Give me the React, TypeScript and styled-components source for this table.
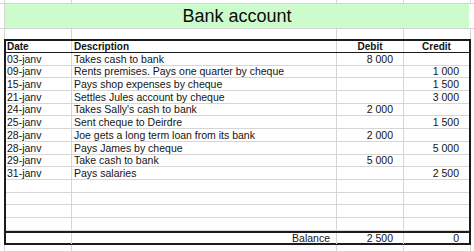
import React from 'react';
import styled, { createGlobalStyle } from 'styled-components';

const GRID = '#d6d6d6';
const INK = '#1b1b1b';

const GlobalStyle = createGlobalStyle`
  html, body {
    margin: 0;
    background: #ffffff;
  }
  body {
    font-family: "Liberation Sans", Arial, sans-serif;
    font-size: 10.5px;
    color: #141414;
  }
`;

const Sheet = styled.div`
  width: 474px;
  height: 251px;
  overflow: hidden;
  display: flex;
  flex-direction: column;
`;

// plain spreadsheet row outside the table (grid lines only)
const SheetRow = styled.div<{ $h: number; $line?: boolean }>`
  display: grid;
  grid-template-columns: 5px 67px 265px 67px 67px 1fr;
  height: ${({ $h }) => $h}px;
  flex: none;
  box-sizing: border-box;
  border-bottom: ${({ $line }) => ($line ? `1px solid ${GRID}` : 'none')};
`;

const SheetCell = styled.div`
  border-right: 1px solid ${GRID};
`;

const Banner = styled.div`
  grid-column: 2 / 6;
  background: #ccfccc;
  margin-right: 2px;
  display: flex;
  align-items: center;
  justify-content: center;
  font-size: 18px;
  color: #0c0c0c;
  padding-top: 1px;
`;

const Table = styled.div`
  flex: none;
  margin-left: 4px;
  width: 467px;
  box-sizing: border-box;
  border: 2px solid ${INK};
  background: #ffffff;
`;

const Row = styled.div<{ $h: number; $kind?: 'head' | 'body' | 'total' }>`
  display: grid;
  grid-template-columns: 66px 265px 67px 65px;
  height: ${({ $h }) => $h}px;
  box-sizing: border-box;
  border-bottom: ${({ $kind }) =>
    $kind === 'head' ? `1px solid ${INK}` : $kind === 'total' ? 'none' : `1px solid ${GRID}`};
  border-top: ${({ $kind }) => ($kind === 'total' ? `2px solid ${INK}` : 'none')};
  font-weight: ${({ $kind }) => ($kind === 'head' ? 'bold' : 'normal')};
  font-size: ${({ $kind }) => ($kind === 'head' ? '10px' : '10.5px')};
`;

const Cell = styled.div<{ $align?: 'left' | 'right' | 'center'; $pl?: number; $pr?: number }>`
  display: flex;
  align-items: flex-end;
  justify-content: ${({ $align }) =>
    $align === 'right' ? 'flex-end' : $align === 'center' ? 'center' : 'flex-start'};
  padding-left: ${({ $pl }) => $pl ?? 0}px;
  padding-right: ${({ $pr }) => $pr ?? 0}px;
  line-height: 11px;
  white-space: nowrap;
  overflow: visible;
  border-right: 1px solid ${GRID};
  &:last-child {
    border-right: none;
  }
`;

interface Entry {
  date: string;
  text: string;
  debit?: string;
  credit?: string;
}

const entries: Entry[] = [
  { date: '03-janv', text: 'Takes cash to bank', debit: '8 000' },
  { date: '09-janv', text: 'Rents premises. Pays one quarter by cheque', credit: '1 000' },
  { date: '15-janv', text: 'Pays shop expenses by cheque', credit: '1 500' },
  { date: '21-janv', text: 'Settles Jules account by cheque', credit: '3 000' },
  { date: '24-janv', text: "Takes Sally's cash to bank", debit: '2 000' },
  { date: '25-janv', text: 'Sent cheque to Deirdre', credit: '1 500' },
  { date: '28-janv', text: 'Joe gets a long term loan from its bank', debit: '2 000' },
  { date: '28-janv', text: 'Pays James by cheque', credit: '5 000' },
  { date: '29-janv', text: 'Take cash to bank', debit: '5 000' },
  { date: '31-janv', text: 'Pays salaries', credit: '2 500' },
];

const BODY_ROWS = 14;
const ROW_H = 12.7;

const App: React.FC = () => {
  const rows: Entry[] = [
    ...entries,
    ...Array.from({ length: BODY_ROWS - entries.length }, () => ({ date: '', text: '' })),
  ];

  return (
    <>
      <GlobalStyle />
      <Sheet>
        <SheetRow $h={4} $line>
          <SheetCell />
          <SheetCell />
          <SheetCell />
          <SheetCell />
          <SheetCell />
        </SheetRow>

        <SheetRow $h={25} $line>
          <SheetCell />
          <Banner>Bank account</Banner>
        </SheetRow>

        <SheetRow $h={10}>
          <SheetCell />
          <SheetCell />
          <SheetCell />
          <SheetCell />
          <SheetCell />
        </SheetRow>

        <Table>
          <Row $h={12} $kind="head">
            <Cell $pl={1}>Date</Cell>
            <Cell $pl={2}>Description</Cell>
            <Cell $align="center">Debit</Cell>
            <Cell $align="center">Credit</Cell>
          </Row>
          {rows.map((r, i) => (
            <Row key={i} $h={ROW_H} $kind="body">
              <Cell $pl={1}>{r.date}</Cell>
              <Cell $pl={2}>{r.text}</Cell>
              <Cell $align="right" $pr={10}>{r.debit}</Cell>
              <Cell $align="right" $pr={10}>{r.credit}</Cell>
            </Row>
          ))}
          <Row $h={12} $kind="total">
            <Cell />
            <Cell $align="right" $pr={6}>Balance</Cell>
            <Cell $align="right" $pr={10}>2 500</Cell>
            <Cell $align="right" $pr={10}>0</Cell>
          </Row>
        </Table>

        <SheetRow $h={12} $line>
          <SheetCell />
          <SheetCell />
          <SheetCell />
          <SheetCell />
          <SheetCell />
        </SheetRow>
      </Sheet>
    </>
  );
};

export default App;
